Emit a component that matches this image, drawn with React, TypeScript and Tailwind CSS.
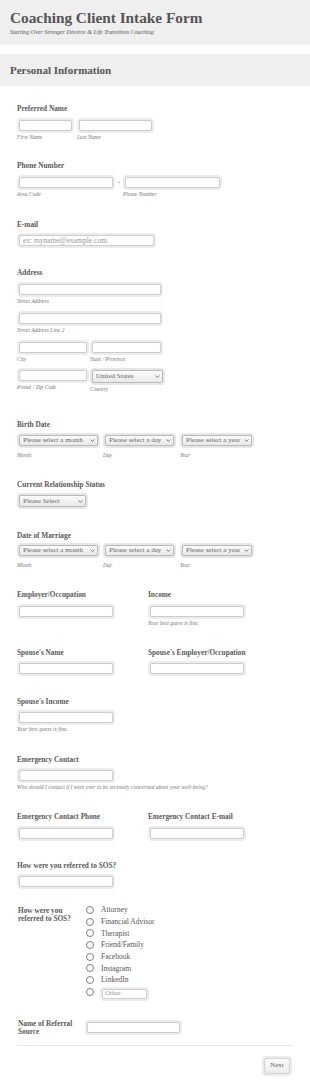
import React from 'react';

type Kids = { children?: React.ReactNode; className?: string };

function Label({ children, className = '' }: Kids) {
  return <div className={`text-[7.3px] leading-[8px] font-bold text-[#595959] ${className}`}>{children}</div>;
}

function Sub({ children, className = '' }: Kids) {
  return <div className={`mt-[1px] text-[5.6px] leading-[6px] italic text-[#777] whitespace-nowrap ${className}`}>{children}</div>;
}

function TextBox({ w, placeholder, h = 'h-[15px]' }: { w: string; placeholder?: string; h?: string }) {
  return (
    <div className={`${w} ${h} shrink-0 p-[2px] rounded-[4px] bg-[#ececec]`}>
      <div className="h-full rounded-[2px] border border-[#cdcdcd] bg-white px-[3px] flex items-center text-[7.5px] text-[#9a9a9a] whitespace-nowrap overflow-hidden">
        {placeholder}
      </div>
    </div>
  );
}

function Select({ w, text, h = 'h-[15px]' }: { w: string; text: string; h?: string }) {
  return (
    <div className={`${w} ${h} shrink-0 p-[2px] rounded-[4px] bg-[#e7e7e7]`}>
      <div className="h-full rounded-[2px] border border-[#b9b9b9] bg-linear-to-b from-[#fbfbfb] to-[#e9e9e9] pl-[3px] pr-[2px] flex items-center justify-between gap-[2px] text-[7px] text-[#666] whitespace-nowrap overflow-hidden">
        <span>{text}</span>
        <svg width="5" height="3" viewBox="0 0 5 3" className="shrink-0">
          <path d="M0.6 0.5 L2.5 2.4 L4.4 0.5" fill="none" stroke="#666" strokeWidth="0.9" />
        </svg>
      </div>
    </div>
  );
}

function DateRow() {
  return (
    <div className="flex">
      <div className="w-[86px]">
        <Select w="w-[83px]" text="Please select a month" />
        <Sub className="mt-[4px]">Month</Sub>
      </div>
      <div className="w-[77px]">
        <Select w="w-[73px]" text="Please select a day" />
        <Sub className="mt-[4px]">Day</Sub>
      </div>
      <div>
        <Select w="w-[74px]" text="Please select a year" />
        <Sub className="mt-[4px]">Year</Sub>
      </div>
    </div>
  );
}

const referrals = ['Attorney', 'Financial Advisor', 'Therapist', 'Friend/Family', 'Facebook', 'Instagram', 'LinkedIn'];

function Radio() {
  return <span className="w-[8px] h-[8px] rounded-full border border-[#808080] bg-white shrink-0" />;
}

export default function App() {
  return (
    <div className="w-[310px] min-h-[1087px] bg-white text-[#555] font-['Liberation_Serif',serif]">
      <div className="h-[45px] bg-[#efefef] pl-[10px] pt-[8px]">
        <h1 className="text-[15.3px] leading-[19px] font-bold text-[#555]">Coaching Client Intake Form</h1>
        <p className="mt-[2px] text-[6px] leading-[6px] italic text-[#555]">
          Starting Over Stronger Divorce &amp; Life Transition Coaching
        </p>
      </div>

      <div className="mt-[9px] h-[32px] bg-[#efefef] pl-[10px] flex items-center">
        <h2 className="text-[11px] font-bold text-[#555]">Personal Information</h2>
      </div>

      <div className="px-[17px] pb-[12px]">
        {/* Preferred name */}
        <Label className="mt-[19px]">Preferred Name</Label>
        <div className="mt-[5px] flex gap-[3px]">
          <div>
            <TextBox w="w-[57px]" />
            <Sub>First Name</Sub>
          </div>
          <div>
            <TextBox w="w-[77px]" />
            <Sub>Last Name</Sub>
          </div>
        </div>

        {/* Phone */}
        <Label className="mt-[22px]">Phone Number</Label>
        <div className="mt-[5px] flex">
          <div>
            <TextBox w="w-[98px]" />
            <Sub>Area Code</Sub>
          </div>
          <div className="w-[8px] h-[15px] flex items-center justify-center text-[7px] text-[#555]">-</div>
          <div>
            <TextBox w="w-[99px]" />
            <Sub>Phone Number</Sub>
          </div>
        </div>

        {/* Email */}
        <Label className="mt-[24px]">E-mail</Label>
        <div className="mt-[4px]">
          <TextBox w="w-[139px]" placeholder="ex: myname@example.com" />
        </div>

        {/* Address */}
        <Label className="mt-[21px]">Address</Label>
        <div className="mt-[5px]">
          <TextBox w="w-[146px]" />
          <Sub>Street Address</Sub>
        </div>
        <div className="mt-[7px]">
          <TextBox w="w-[146px]" />
          <Sub>Street Address Line 2</Sub>
        </div>
        <div className="mt-[7px] flex gap-[1px]">
          <div>
            <TextBox w="w-[72px]" />
            <Sub>City</Sub>
          </div>
          <div>
            <TextBox w="w-[73px]" />
            <Sub>State / Province</Sub>
          </div>
        </div>
        <div className="mt-[6px] flex gap-[1px]">
          <div>
            <TextBox w="w-[72px]" />
            <Sub>Postal / Zip Code</Sub>
          </div>
          <div>
            <Select w="w-[75px]" h="h-[17px]" text="United States" />
            <Sub>Country</Sub>
          </div>
        </div>

        {/* Birth date */}
        <Label className="mt-[29px]">Birth Date</Label>
        <div className="mt-[4px]">
          <DateRow />
        </div>

        {/* Relationship status */}
        <Label className="mt-[23px]">Current Relationship Status</Label>
        <div className="mt-[4px]">
          <Select w="w-[71px]" h="h-[16px]" text="Please Select" />
        </div>

        {/* Date of marriage */}
        <Label className="mt-[23px]">Date of Marriage</Label>
        <div className="mt-[3px]">
          <DateRow />
        </div>

        {/* Employer / Income */}
        <div className="mt-[23px] grid grid-cols-[131px_1fr]">
          <div>
            <Label>Employer/Occupation</Label>
            <div className="mt-[5px]">
              <TextBox w="w-[98px]" />
            </div>
          </div>
          <div>
            <Label>Income</Label>
            <div className="mt-[5px]">
              <TextBox w="w-[98px]" />
              <Sub>Your best guess is fine.</Sub>
            </div>
          </div>
        </div>

        {/* Spouse */}
        <div className="mt-[23px] grid grid-cols-[131px_1fr]">
          <div>
            <Label>Spouse&apos;s Name</Label>
            <div className="mt-[4px]">
              <TextBox w="w-[98px]" />
            </div>
          </div>
          <div>
            <Label>Spouse&apos;s Employer/Occupation</Label>
            <div className="mt-[4px]">
              <TextBox w="w-[98px]" />
            </div>
          </div>
        </div>

        <Label className="mt-[22px]">Spouse&apos;s Income</Label>
        <div className="mt-[4px]">
          <TextBox w="w-[98px]" />
          <Sub>Your best guess is fine.</Sub>
        </div>

        {/* Emergency */}
        <Label className="mt-[24px]">Emergency Contact</Label>
        <div className="mt-[4px]">
          <TextBox w="w-[98px]" />
          <Sub>Who should I contact if I were ever to be seriously concerned about your well-being?</Sub>
        </div>

        <div className="mt-[23px] grid grid-cols-[131px_1fr]">
          <div>
            <Label>Emergency Contact Phone</Label>
            <div className="mt-[5px]">
              <TextBox w="w-[98px]" />
            </div>
          </div>
          <div>
            <Label>Emergency Contact E-mail</Label>
            <div className="mt-[5px]">
              <TextBox w="w-[98px]" />
            </div>
          </div>
        </div>

        <Label className="mt-[21px]">How were you referred to SOS?</Label>
        <div className="mt-[4px]">
          <TextBox w="w-[98px]" />
        </div>

        {/* Referral radios */}
        <div className="mt-[15px] flex">
          <Label className="w-[69px] pl-[1px] pt-[3px]">
            How were you
            <br />
            referred to SOS?
          </Label>
          <div className="flex flex-col">
            {referrals.map((r) => (
              <div key={r} className="h-[11.7px] flex items-center gap-[7px]">
                <Radio />
                <span className="text-[7.5px] text-[#555] whitespace-nowrap">{r}</span>
              </div>
            ))}
            <div className="h-[11.7px] flex items-center gap-[6px]">
              <Radio />
              <div className="w-[49px] h-[14px] p-[2px] rounded-[4px] bg-[#ececec] mt-[4px]">
                <div className="h-full rounded-[2px] border border-[#cdcdcd] bg-white px-[2px] flex items-center text-[7px] text-[#9a9a9a]">
                  Other
                </div>
              </div>
            </div>
          </div>
        </div>

        <div className="mt-[22px] flex">
          <Label className="w-[68px] pl-[1px]">
            Name of Referral
            <br />
            Source
          </Label>
          <TextBox w="w-[97px]" />
        </div>

        <div className="mt-[9px] h-px bg-[#e6e6e6]" />

        <div className="mt-[10px] flex justify-end pr-[1px]">
          <div className="w-[30px] h-[20px] p-[2px] rounded-[4px] bg-[#ececec]">
            <button className="w-full h-full rounded-[2px] border border-[#d6d6d6] bg-linear-to-b from-[#fafafa] to-[#ececec] text-[7px] text-[#666] flex items-center justify-center">
              Next
            </button>
          </div>
        </div>
      </div>
    </div>
  );
}
